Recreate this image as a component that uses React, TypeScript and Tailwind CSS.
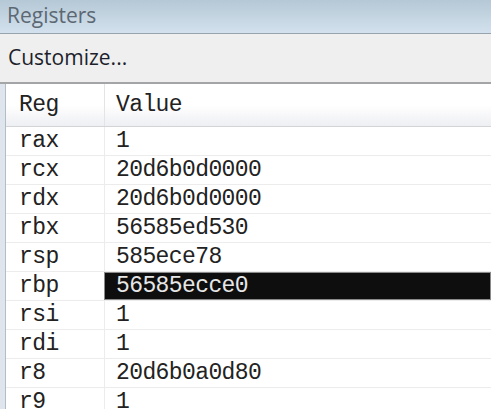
import React from 'react';

const registers: { name: string; value: string }[] = [
    { name: 'rax', value: '1' },
    { name: 'rcx', value: '20d6b0d0000' },
    { name: 'rdx', value: '20d6b0d0000' },
    { name: 'rbx', value: '56585ed530' },
    { name: 'rsp', value: '585ece78' },
    { name: 'rbp', value: '56585ecce0' },
    { name: 'rsi', value: '1' },
    { name: 'rdi', value: '1' },
    { name: 'r8', value: '20d6b0a0d80' },
    { name: 'r9', value: '1' },
];

const mono = "font-['Liberation_Mono','Courier_New',monospace] text-[23px] tracking-[-0.6px]";

const App: React.FC = () => {
    const selected = 'rbp';

    return (
        <div className="w-[491px] h-[409px] overflow-hidden bg-white flex flex-col font-['Open_Sans','Noto_Sans',sans-serif]">
            {/* Title */}
            <div className="h-[34px] shrink-0 bg-gradient-to-b from-[#b5c8d5] to-[#d3e1ee] border-b border-[#97a3ad] flex items-center pl-[7px]">
                <span className="text-[21px] text-[#5c6873] leading-none -mt-[2px]">Registers</span>
            </div>

            {/* Toolbar */}
            <div className="h-[50px] shrink-0 bg-[#efefef] border-b-2 border-[#a3a5a7] flex items-center pl-[8px]">
                <span className="text-[21px] text-[#1d1f2c] leading-none -mt-[1px]">Customize...</span>
            </div>

            {/* Grid */}
            <div className="flex-1 flex">
                <div className="w-[6px] shrink-0 bg-[#dfe5ec] border-r border-[#b4bcc4]" />
                <div className="flex-1 flex flex-col">
                    <div className="h-[43px] shrink-0 flex bg-gradient-to-b from-white via-white to-[#eeeff3] border-b border-[#d3d4d8] text-[#222]">
                        <div className={`w-[99px] border-r border-[#e4e4e8] flex items-center pl-[13px] ${mono}`}>Reg</div>
                        <div className={`flex-1 flex items-center pl-[11px] ${mono}`}>Value</div>
                    </div>
                    {registers.map((r) => (
                        <div key={r.name} className="h-[29px] shrink-0 flex border-b border-[#ececec] text-[#222]">
                            <div className={`w-[99px] border-r border-[#ececec] flex items-center pl-[13px] ${mono}`}>{r.name}</div>
                            <div
                                className={`flex-1 flex items-center pl-[11px] ${mono} ${
                                    r.name === selected ? 'bg-[#0e0e0e] text-[#e6e6e6] border border-[#8a8a8a] -ml-px' : ''
                                }`}
                            >
                                {r.value}
                            </div>
                        </div>
                    ))}
                </div>
            </div>
        </div>
    );
};

export default App;
